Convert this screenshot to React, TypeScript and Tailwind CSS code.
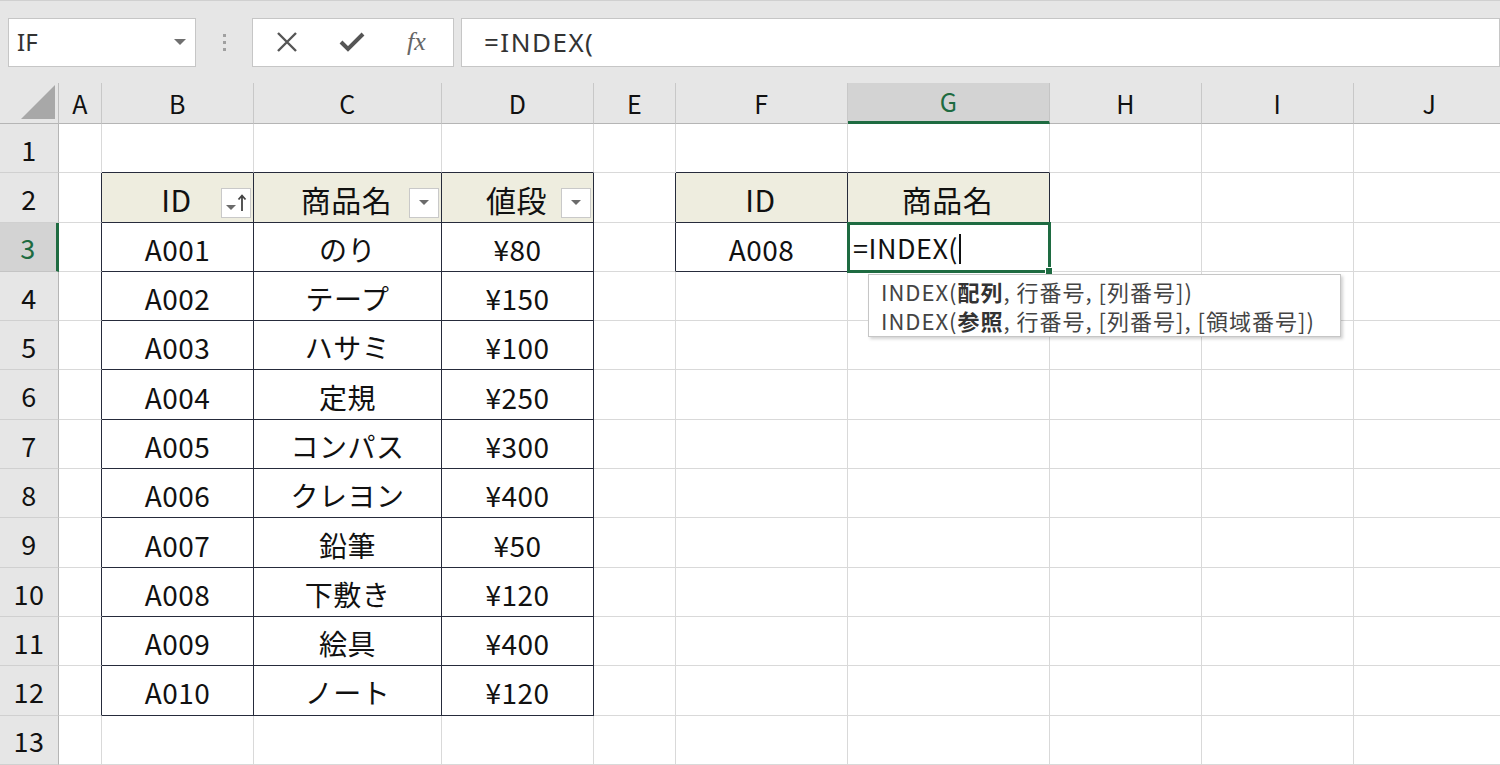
import React from 'react';

const COLS = ['A', 'B', 'C', 'D', 'E', 'F', 'G', 'H', 'I', 'J'];

const products = [
  ['A001', 'のり', '¥80'],
  ['A002', 'テープ', '¥150'],
  ['A003', 'ハサミ', '¥100'],
  ['A004', '定規', '¥250'],
  ['A005', 'コンパス', '¥300'],
  ['A006', 'クレヨン', '¥400'],
  ['A007', '鉛筆', '¥50'],
  ['A008', '下敷き', '¥120'],
  ['A009', '絵具', '¥400'],
  ['A010', 'ノート', '¥120'],
];

const font = { fontFamily: '"Noto Sans CJK JP", "Noto Sans", sans-serif' };

function Tri() {
  return (
    <svg width="12" height="7" viewBox="0 0 12 7">
      <path d="M1 1h10L6 6z" fill="#6b6b6b" />
    </svg>
  );
}

function FilterBtn({ sorted }: { sorted?: boolean }) {
  return (
    <div className="absolute right-[2px] bottom-[4px] w-[30px] h-[30px] bg-white border border-[#c9c9c9] flex items-center justify-center">
      {sorted ? (
        <svg width="26" height="22" viewBox="0 0 26 22">
          <path d="M3 13h10l-5 5z" fill="#6b6b6b" />
          <path d="M19 19V4M15.5 7.5L19 3.5l3.5 4" stroke="#444" strokeWidth="1.8" fill="none" />
        </svg>
      ) : (
        <Tri />
      )}
    </div>
  );
}

// what goes in each body cell (row 1..13, col 0..9)
function cellContent(r: number, c: number): { text?: React.ReactNode; head?: boolean; filter?: 'sort' | 'plain' } {
  if (r === 2) {
    if (c === 1) return { text: 'ID', head: true, filter: 'sort' };
    if (c === 2) return { text: '商品名', head: true, filter: 'plain' };
    if (c === 3) return { text: '値段', head: true, filter: 'plain' };
    if (c === 5) return { text: 'ID', head: true };
    if (c === 6) return { text: '商品名', head: true };
  }
  if (r >= 3 && r <= 12 && c >= 1 && c <= 3) return { text: products[r - 3][c - 1] };
  if (r === 3 && c === 5) return { text: 'A008' };
  return {};
}

function borderCls(r: number, c: number) {
  const inT1 = r >= 2 && r <= 12;
  const inT2 = r >= 2 && r <= 3;
  const darkR = (inT1 && c >= 0 && c <= 3) || (inT2 && c >= 4 && c <= 6);
  const darkB = (c >= 1 && c <= 3 && r >= 1 && r <= 12) || ((c === 5 || c === 6) && r >= 1 && r <= 3);
  return [
    darkR ? 'border-r border-r-[#262b3b]' : 'border-r border-r-[#d9d9d9]',
    darkB ? 'border-b border-b-[#262b3b]' : 'border-b border-b-[#d9d9d9]',
  ].join(' ');
}

export default function App() {
  const rows = Array.from({ length: 13 }, (_, i) => i + 1);
  return (
    <div className="w-[1500px] h-[765px] overflow-hidden bg-white text-[#111]" style={font}>
      {/* formula bar */}
      <div className="h-[83px] bg-[#e6e6e6] border-t border-[#d0d0d0] flex items-center pl-[8px] gap-0">
        <div className="w-[188px] h-[49px] bg-white border border-[#c6c6c6] flex items-center justify-between pl-[8px] pr-[8px]">
          <span className="text-[24px] text-[#333]" style={{ fontFamily: '"Noto Sans", sans-serif' }}>IF</span>
          <svg width="14" height="8" viewBox="0 0 14 8"><path d="M1 1h12L7 7z" fill="#6f6f6f" /></svg>
        </div>
        <div className="w-[56px] flex flex-col items-center gap-[4px]">
          <div className="w-[3px] h-[3px] bg-[#a0a0a0]" />
          <div className="w-[3px] h-[3px] bg-[#a0a0a0]" />
          <div className="w-[3px] h-[3px] bg-[#a0a0a0]" />
        </div>
        <div className="w-[202px] h-[49px] bg-white border border-[#c6c6c6] flex items-center pl-[22px]">
          <svg width="24" height="24" viewBox="0 0 24 24"><path d="M3 3l18 18M21 3L3 21" stroke="#555" strokeWidth="2.4" /></svg>
          <svg className="ml-[40px]" width="26" height="22" viewBox="0 0 26 22"><path d="M2 11l7 7L24 3" stroke="#555" strokeWidth="4" fill="none" /></svg>
          <span className="ml-[42px] text-[26px] italic text-[#666] leading-none" style={{ fontFamily: '"Liberation Serif", serif' }}>fx</span>
        </div>
        <div className="ml-[7px] flex-1 h-[49px] bg-white border border-[#c6c6c6] flex items-center pl-[22px]">
          <span className="text-[26px] tracking-[1.5px] text-[#333]" style={{ fontFamily: '"Noto Sans", sans-serif' }}>=INDEX(</span>
        </div>
      </div>

      {/* sheet */}
      <div
        className="grid grid-cols-[59px_43px_152px_188px_152px_82px_172px_202px_152px_152px_152px_1fr] grid-rows-[41px_repeat(13,49.3px)] text-[28px] tracking-[0.5px]"
      >
        {/* header row */}
        <div className="bg-[#e6e6e6] border-r border-r-[#bdbdbd] border-b border-b-[#b5b5b5] flex items-end justify-end pr-[3px] pb-[4px]">
          <svg width="34" height="34" viewBox="0 0 34 34"><path d="M34 0V34H0z" fill="#a8a8a8" /></svg>
        </div>
        {COLS.map((l) =>
          l === 'G' ? (
            <div key={l} className="bg-[#d3d3d3] border-r border-r-[#c4c4c4] border-b-[3px] border-b-[#1e6b41] flex items-center justify-center text-[25px] text-[#1e6b41]">{l}</div>
          ) : (
            <div key={l} className="bg-[#e6e6e6] border-r border-r-[#c8c8c8] border-b border-b-[#b5b5b5] flex items-center justify-center text-[25px] pt-[2px]">{l}</div>
          ),
        )}
        <div className="bg-[#e6e6e6] border-b border-b-[#b5b5b5]" />

        {rows.map((r) => (
          <React.Fragment key={r}>
            {r === 3 ? (
              <div className="bg-[#d3d3d3] border-r-[3px] border-r-[#1e6b41] border-b border-b-[#c4c4c4] flex items-center justify-center text-[27px] text-[#1e6b41] pt-[4px]">{r}</div>
            ) : (
              <div className="bg-[#e6e6e6] border-r border-r-[#b5b5b5] border-b border-b-[#d0d0d0] flex items-center justify-center text-[27px] pt-[4px]">{r}</div>
            )}
            {COLS.map((_, c) => {
              const info = cellContent(r, c);
              if (r === 3 && c === 6) {
                return (
                  <div key={c} className="relative border-r border-r-[#d9d9d9] border-b border-b-[#d9d9d9]">
                    <div className="absolute -left-[1px] -top-[1px] w-[204px] h-[51px] border-[3px] border-[#1e6b41] z-10 flex items-center pl-[3px] pt-[3px]">
                      <span className="text-[27px] tracking-[0.5px]">=INDEX(</span>
                      <span className="w-[1.5px] h-[30px] bg-[#111] ml-[1px]" />
                      <span className="absolute -right-[5px] -bottom-[5px] w-[8px] h-[8px] bg-[#1e6b41] border border-white" />
                    </div>
                    {/* function tooltip */}
                    <div
                      className="absolute left-[20px] top-[51px] z-20 w-[473px] h-[63px] bg-white border border-[#c6c6c6] shadow-[2px_2px_3px_rgba(0,0,0,0.18)] pl-[12px] pt-[2px] text-[22px] tracking-[1px] leading-[29px] text-[#444] whitespace-nowrap"
                      style={{ fontFamily: '"Noto Sans CJK JP", "Noto Sans", sans-serif' }}
                    >
                      <div>INDEX(<span className="font-semibold text-[#333]">配列</span>, 行番号, [列番号])</div>
                      <div>INDEX(<span className="font-semibold text-[#333]">参照</span>, 行番号, [列番号], [領域番号])</div>
                    </div>
                  </div>
                );
              }
              return (
                <div
                  key={c}
                  className={`relative flex items-center justify-center pt-[4px] ${borderCls(r, c)} ${info.head ? 'bg-[#eeeddf] text-[30px] pr-[2px]' : ''}`}
                >
                  {info.text}
                  {info.filter === 'sort' && <FilterBtn sorted />}
                  {info.filter === 'plain' && <FilterBtn />}
                </div>
              );
            })}
            <div className="border-b border-b-[#d9d9d9]" />
          </React.Fragment>
        ))}
      </div>
    </div>
  );
}
